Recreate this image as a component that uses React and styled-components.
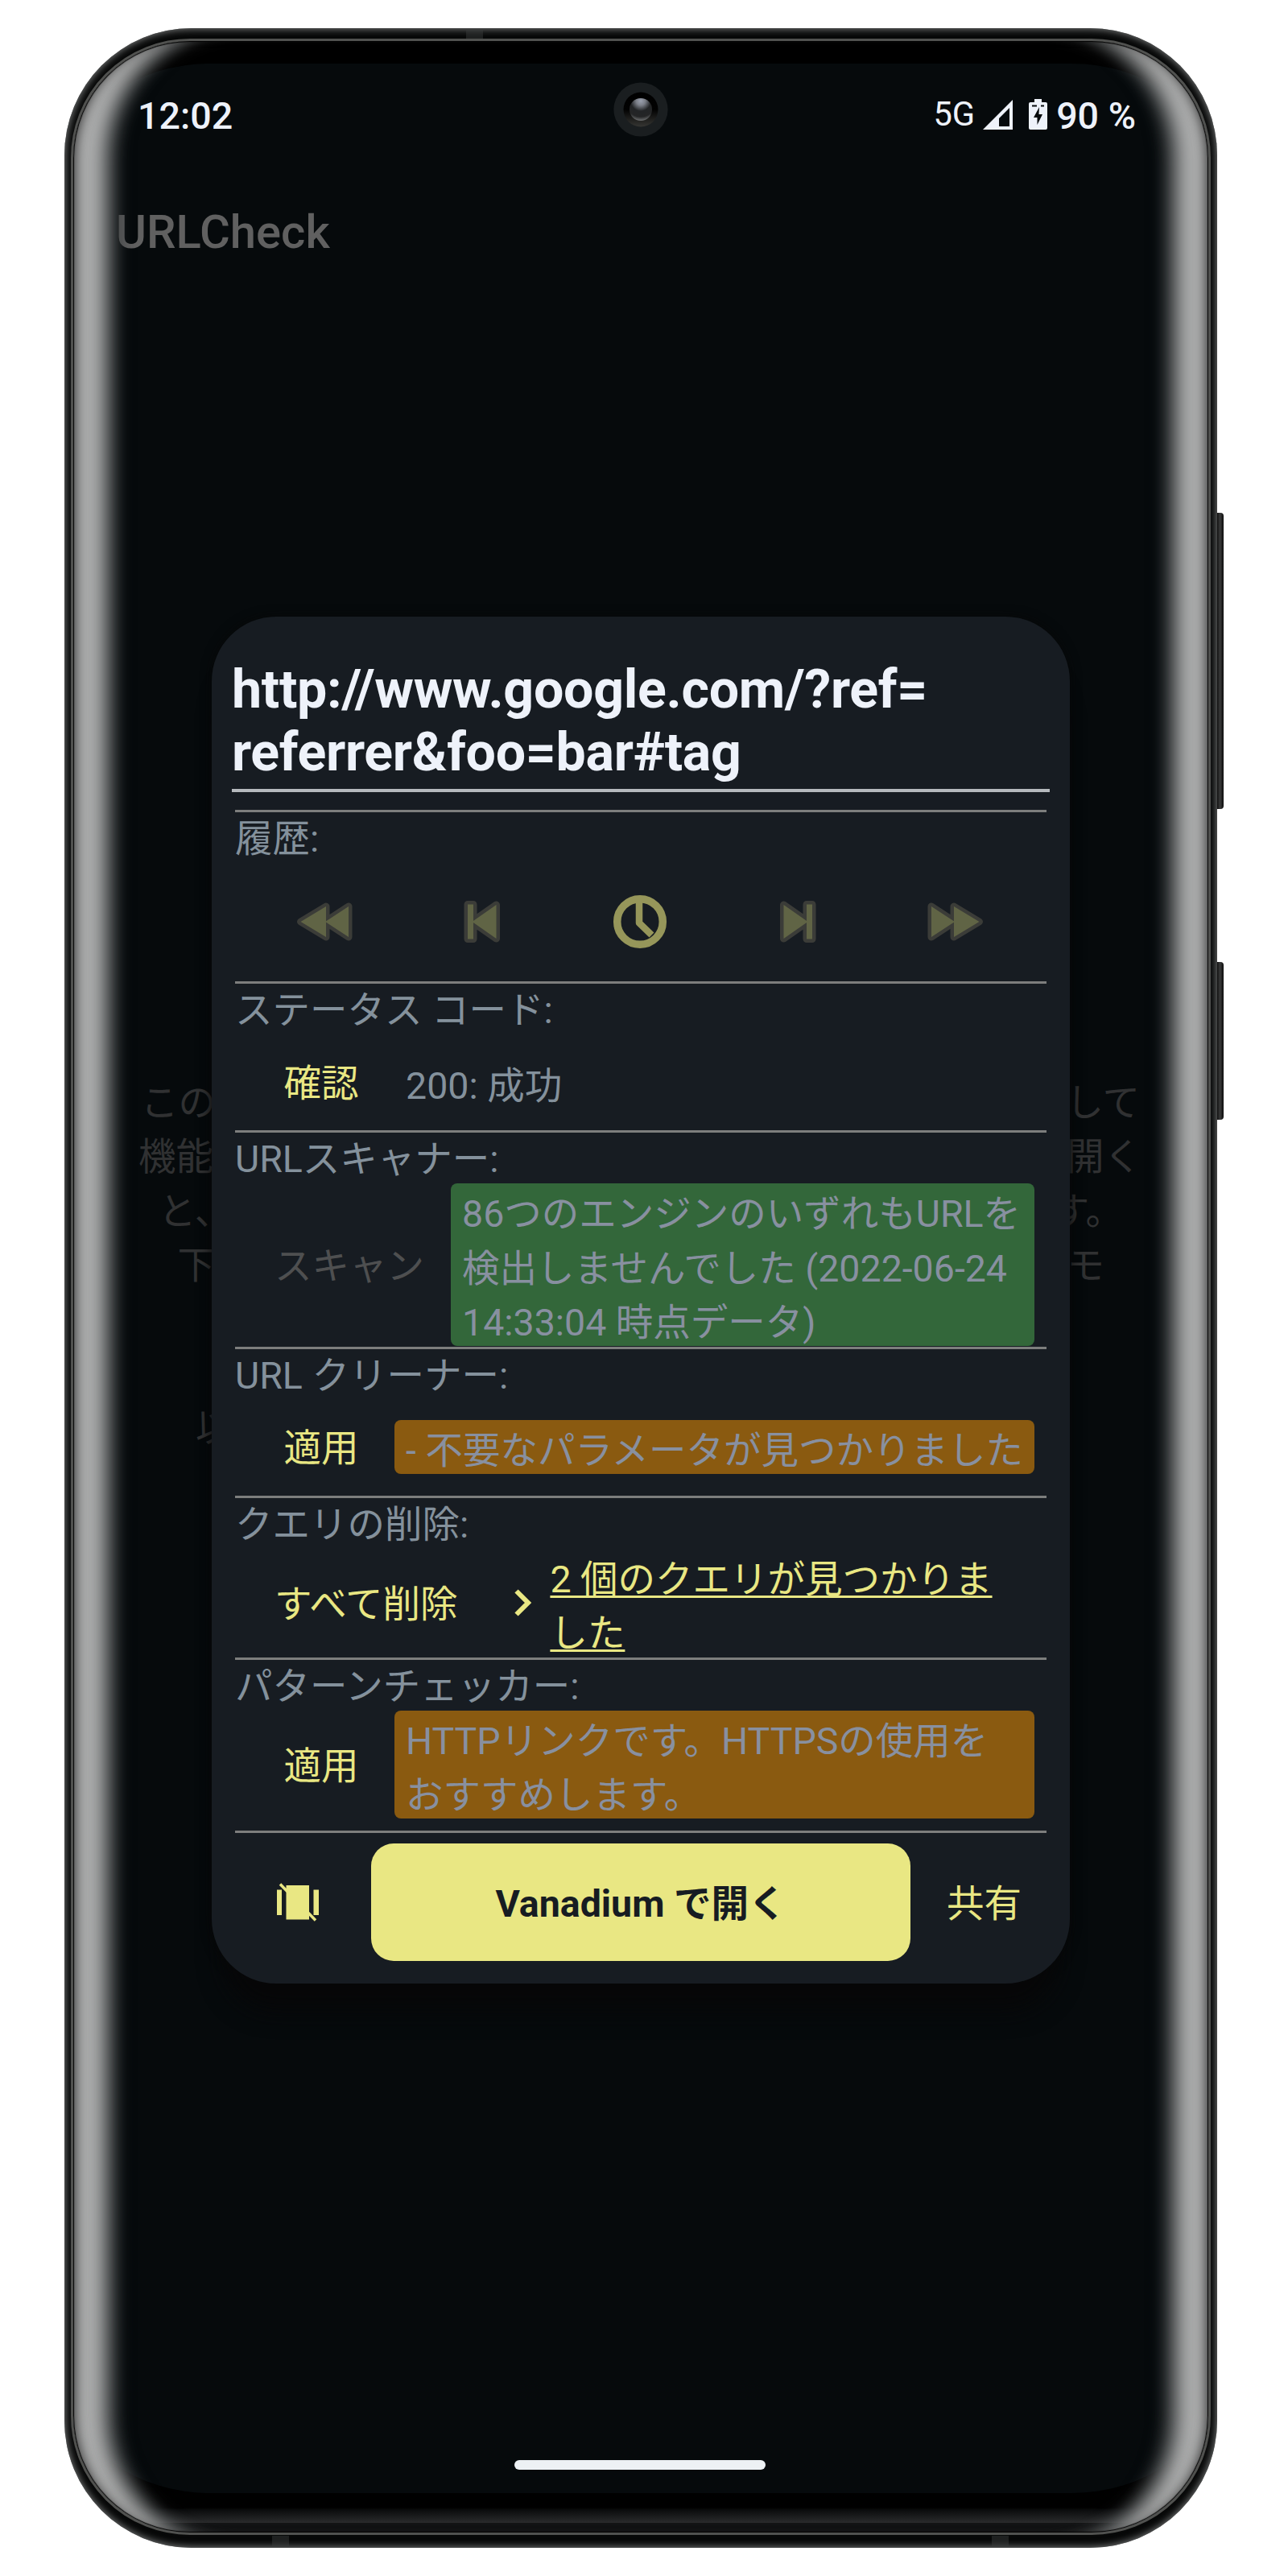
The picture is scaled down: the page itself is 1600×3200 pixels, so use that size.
import React from 'react';
import styled, { createGlobalStyle, css } from 'styled-components';

const c = {
  accent: '#e9e783',
  label: '#84919c',
  bright: '#eef2fa',
  dialog: '#171c22',
  screen: '#060a0c',
  green: '#33673a',
  orange: '#8a5a10',
};

const Global = createGlobalStyle`
  *, *::before, *::after { box-sizing: border-box; }
  body {
    margin: 0;
    background: #fff;
    font-family: Roboto, 'Noto Sans CJK JP', sans-serif;
    text-spacing-trim: space-all;
  }
  button { font: inherit; border: 0; background: none; padding: 0; margin: 0; color: inherit; }
`;

const Page = styled.main`
  width: 1600px;
  height: 3200px;
  padding: 35px 0 0 80px;
  overflow: hidden;
`;

const Frame = styled.div`
  position: relative;
  width: 1432px;
  height: 3130px;
  padding: 13px 8px 16px;
  border-radius: 158px;
  background: #070808;
  box-shadow: inset 0 0 10px 1px #7c7e7e;
`;

const SideKey = styled.i`
  position: absolute;
  left: 100%;
  top: ${(p) => p.$top}px;
  width: 8px;
  height: ${(p) => p.$height}px;
  border-radius: 0 4px 4px 0;
  background: linear-gradient(90deg, #111, #3a3b3b 45%, #0b0b0b);
`;

const Antenna = styled.i`
  position: absolute;
  ${(p) => (p.$edge === 'top' ? 'top: 1px;' : 'bottom: 2px;')}
  left: ${(p) => p.$left}px;
  width: 21px;
  height: 13px;
  background: rgba(60, 62, 62, 0.45);
`;

const Glass = styled.div`
  position: relative;
  height: 100%;
  border: 3px solid #50514f;
  border-radius: 148px;
  overflow: hidden;
  padding-top: 28px;
  background: linear-gradient(0deg, #121314 12px, #2a2b2c 12px, #0b0c0d 28px, #000 31px);
`;

const Glow = styled.div`
  position: absolute;
  inset: 0;
  border-radius: 145px;
  pointer-events: none;
  box-shadow:
    inset 0 0 1px 1px #000,
    inset 12px 0 16px -10px rgba(0, 0, 0, 0.75),
    inset -12px 0 16px -10px rgba(0, 0, 0, 0.75),
    inset 64px 0 24px -22px #acadad,
    inset -64px 0 24px -22px #acadad,
    inset 80px 0 18px -22px rgba(30, 33, 35, 0.75),
    inset -80px 0 18px -22px rgba(30, 33, 35, 0.75);
`;

const Screen = styled.div`
  position: relative;
  display: flex;
  flex-direction: column;
  height: 3018px;
  border-radius: 170px / 128px;
  background: ${c.screen};
`;

const StatusBar = styled.header`
  display: flex;
  align-items: flex-start;
  padding: 37px 90px 0 80px;
  color: ${c.bright};
  font-size: 46.6px;
  font-weight: 500;
  line-height: 56px;
`;

const Network = styled.span`
  margin-left: auto;
  padding-right: 10px;
  font-size: 41.6px;
  font-weight: 400;
  line-height: 52px;
`;

const SignalIcon = styled.svg`
  width: 37px;
  height: 37px;
  margin: 8px 20px 0 0;
`;

const BatteryIcon = styled.svg`
  width: 23px;
  height: 38px;
  margin: 7px 11px 0 0;
`;

const Camera = styled.svg`
  position: absolute;
  left: 671px;
  top: 23px;
  width: 68px;
  height: 68px;
`;

const Title = styled.h1`
  margin: 82px 0 0;
  padding-left: 53px;
  color: #606060;
  font-size: 58px;
  font-weight: 500;
  line-height: 68px;
`;

const Intro = styled.div`
  margin-top: 1015px;
  color: #303132;
  font-size: 46.5px;
  line-height: 67.3px;
`;

const IntroLine = styled.div`
  display: flex;
  justify-content: space-between;
  height: 67.3px;
  padding: 0 ${(p) => p.$right}px 0 ${(p) => p.$left}px;
`;

const HomeBar = styled.i`
  width: 312px;
  height: 12px;
  margin: auto auto 29px 548px;
  border-radius: 6px;
  background: #edf1f4;
`;

const Dialog = styled.section`
  position: absolute;
  left: 172px;
  top: 687px;
  width: 1066px;
  height: 1698px;
  padding: 52px 29px 0;
  border-radius: 80px;
  background: ${c.dialog};
  box-shadow: 0 48px 30px -14px #070708, 0 0 14px rgba(7, 7, 8, 0.8);
  font-size: 46.5px;
  line-height: 67.3px;
`;

const UrlField = styled.div`
  margin: 0 -4px 22px;
  padding-bottom: 7px;
  border-bottom: 4px solid #b5b9bd;
  color: ${c.bright};
  font-size: 66.3px;
  font-weight: 700;
  letter-spacing: -0.3px;
  line-height: 77.6px;
`;

const Module = styled.section`
  display: flex;
  flex-direction: column;
  height: ${(p) => p.$height}px;
  border-top: 3px solid #7d7e7d;
`;

const Label = styled.div`
  flex: none;
  height: 62px;
  color: ${c.label};
  white-space: nowrap;
`;

const Row = styled.div`
  display: flex;
  flex: 1;
  align-items: center;
  padding: 0 15px ${(p) => p.$bottom || 0}px 16px;
`;

const TextButton = styled.button`
  flex: none;
  min-width: 182px;
  padding: 4px 33px 0;
  color: ${(p) => (p.disabled ? '#4e4f50' : c.accent)};
  white-space: nowrap;
`;

const Message = styled.div`
  flex: 1;
  padding: 0 14px;
  border-radius: 8px;
  background: ${(p) => p.$tone || 'transparent'};
  color: ${(p) => (p.$tone ? '#8890a0' : c.label)};
  white-space: nowrap;
`;

const Lines = styled.span`
  display: block;
  margin: 5px 0 -5px;
  ${(p) =>
    p.$link &&
    css`
      color: ${c.accent};
      text-decoration: underline;
      text-decoration-thickness: 2.5px;
      text-underline-offset: 4px;
      text-decoration-skip-ink: none;
    `}
`;

const Chevron = styled.svg`
  flex: none;
  width: 24px;
  height: 36px;
  margin: 0 21px 0 37px;
`;

const HistoryRow = styled.div`
  display: flex;
  flex: 1;
  padding: 0 15px 0 13px;
`;

const HistoryButton = styled.button`
  display: flex;
  flex: 1;
  align-items: center;
  justify-content: center;
`;

const Footer = styled.footer`
  display: flex;
  align-items: center;
  padding-top: 13px;
  border-top: 3px solid #7d7e7d;
`;

const IconButton = styled.button`
  display: flex;
  padding: 0 64px 0 52px;
  svg { display: block; }
`;

const OpenButton = styled.button`
  width: 670px;
  height: 146px;
  padding-top: 5px;
  border-radius: 28px;
  background: ${c.accent};
  color: ${c.dialog};
  font-weight: 700;
  white-space: pre;
`;

const ShareButton = styled.button`
  padding: 4px 0 0 45px;
  color: ${c.accent};
`;

const shade = { stroke: '#3b3c38', strokeWidth: 9, strokeLinejoin: 'round', fill: '#3b3c38' };

function MediaIcon({ width, d, flip }) {
  return (
    <svg width={width} height="54" viewBox={`0 0 ${width} 54`} transform={flip ? 'scale(-1 1)' : undefined}>
      <path d={d} {...shade} />
      <path d={d} fill="#606445" />
    </svg>
  );
}

const REWIND = 'M6.5 27L38 8V46ZM37 27L66 8V46Z';
const PREVIOUS = 'M5 5.5H12V48.5H5ZM10.500 27L40.500 6V48Z';

function ClockIcon() {
  return (
    <svg width="68" height="68" viewBox="0 0 68 68" fill="none" stroke="#96965a">
      <circle cx="34" cy="34" r="28.300" strokeWidth="9.500" />
      <path d="M33 8V35.500L48.500 50.500" strokeWidth="8.500" strokeLinejoin="round" />
    </svg>
  );
}

function History() {
  return (
    <Module $height={213}>
      <Label>履歴:</Label>
      <HistoryRow>
        <HistoryButton><MediaIcon width={72} d={REWIND} /></HistoryButton>
        <HistoryButton><MediaIcon width={46} d={PREVIOUS} /></HistoryButton>
        <HistoryButton><ClockIcon /></HistoryButton>
        <HistoryButton><MediaIcon width={46} d={PREVIOUS} flip /></HistoryButton>
        <HistoryButton><MediaIcon width={72} d={REWIND} flip /></HistoryButton>
      </HistoryRow>
    </Module>
  );
}

function UrlDialog() {
  return (
    <Dialog>
      <UrlField>http://www.google.com/?ref=<br />referrer&amp;foo=bar#tag</UrlField>
      <History />
      <Module $height={185}>
        <Label>ステータス コード:</Label>
        <Row>
          <TextButton>確認</TextButton>
          <Message><Lines>200: 成功</Lines></Message>
        </Row>
      </Module>
      <Module $height={269}>
        <Label>URLスキャナー:</Label>
        <Row>
          <TextButton disabled>スキャン</TextButton>
          <Message $tone={c.green}>
            <Lines>86つのエンジンのいずれもURLを<br />検出しませんでした (2022-06-24<br />14:33:04 時点データ)</Lines>
          </Message>
        </Row>
      </Module>
      <Module $height={185}>
        <Label>URL クリーナー:</Label>
        <Row $bottom={2}>
          <TextButton>適用</TextButton>
          <Message $tone={c.orange}><Lines>- 不要なパラメータが見つかりました</Lines></Message>
        </Row>
      </Module>
      <Module $height={201}>
        <Label>クエリの削除:</Label>
        <Row>
          <TextButton>すべて削除</TextButton>
          <Chevron viewBox="0 0 24 36" fill="none" stroke={c.accent} strokeWidth="6">
            <path d="M3.500 3.500L18 18L3.500 32.500" />
          </Chevron>
          <Lines $link>2 個のクエリが見つかりま<br />した</Lines>
        </Row>
      </Module>
      <Module $height={215}>
        <Label>パターンチェッカー:</Label>
        <Row $bottom={14}>
          <TextButton>適用</TextButton>
          <Message $tone={c.orange}><Lines>HTTPリンクです。HTTPSの使用を<br />おすすめします。</Lines></Message>
        </Row>
      </Module>
      <Footer>
        <IconButton>
          <svg width="53" height="48" viewBox="0 0 53 48" fill={c.accent}>
            <path d="M0 8.500H6V40H0ZM11.500 3H40V45.500H11.500ZM45.500 8.500H52V40H45.500Z" />
            <path d="M4 1.500L48 46.500" stroke={c.accent} strokeWidth="3.500" />
          </svg>
        </IconButton>
        <OpenButton>Vanadium で開く</OpenButton>
        <ShareButton>共有</ShareButton>
      </Footer>
    </Dialog>
  );
}

function FrontCamera() {
  return (
    <Camera viewBox="0 0 68 68">
      <defs>
        <linearGradient id="rim" x1="0" y1="0" x2="0" y2="1">
          <stop offset="0" stopColor="#000" />
          <stop offset=".5" stopColor="#020202" />
          <stop offset="1" stopColor="#363633" />
        </linearGradient>
        <radialGradient id="lens" cx=".5" cy=".12" r=".9">
          <stop offset="0" stopColor="#9aa0ae" />
          <stop offset=".22" stopColor="#7b7f88" />
          <stop offset=".5" stopColor="#222426" />
          <stop offset=".78" stopColor="#242526" />
          <stop offset="1" stopColor="#77797a" />
        </radialGradient>
      </defs>
      <circle cx="34" cy="34" r="33.600" fill="#1a1e20" />
      <circle cx="34" cy="34" r="21.500" fill="url(#rim)" />
      <circle cx="34" cy="34" r="14" fill="url(#lens)" />
    </Camera>
  );
}

export default function App() {
  return (
    <Page lang="ja">
      <Global />
      <Frame>
        <SideKey $top={602} $height={368} />
        <SideKey $top={1160} $height={196} />
        <Antenna $edge="top" $left={499} />
        <Antenna $edge="bottom" $left={258} />
        <Antenna $edge="bottom" $left={1152} />
        <Glass>
          <Screen>
            <StatusBar>
              <span>12:02</span>
              <Network>5G</Network>
              <SignalIcon viewBox="0 0 37 37">
                <path d="M0 37L37 0V37ZM20 33H33V10L20 23Z" fill={c.bright} fillRule="evenodd" />
              </SignalIcon>
              <BatteryIcon viewBox="0 0 23 38">
                <path d="M7 0H16V4H21Q23 4 23 6V36Q23 38 21 38H2Q0 38 0 36V6Q0 4 2 4H7Z" fill={c.bright} />
                <path d="M4 8.500H10M15 8.500H19" stroke={c.screen} strokeWidth="1.800" />
                <path d="M13 10L6 23H10.500V32L17 19H12.500Z" fill={c.screen} />
              </BatteryIcon>
              <span>90 %</span>
            </StatusBar>
            <FrontCamera />
            <Title>URLCheck</Title>
            <Intro>
              <IntroLine $left={84} $right={85}><span>この</span><span>して</span></IntroLine>
              <IntroLine $left={81} $right={83}><span>機能</span><span>開く</span></IntroLine>
              <IntroLine $left={106} $right={106}><span>と、</span><span>す。</span></IntroLine>
              <IntroLine $left={129.5} $right={129}><span>下</span><span>モ</span></IntroLine>
              <IntroLine />
              <IntroLine />
              <IntroLine $left={152} $right={0}><span>以</span></IntroLine>
            </Intro>
            <HomeBar />
            <UrlDialog />
          </Screen>
          <Glow />
        </Glass>
      </Frame>
    </Page>
  );
}
